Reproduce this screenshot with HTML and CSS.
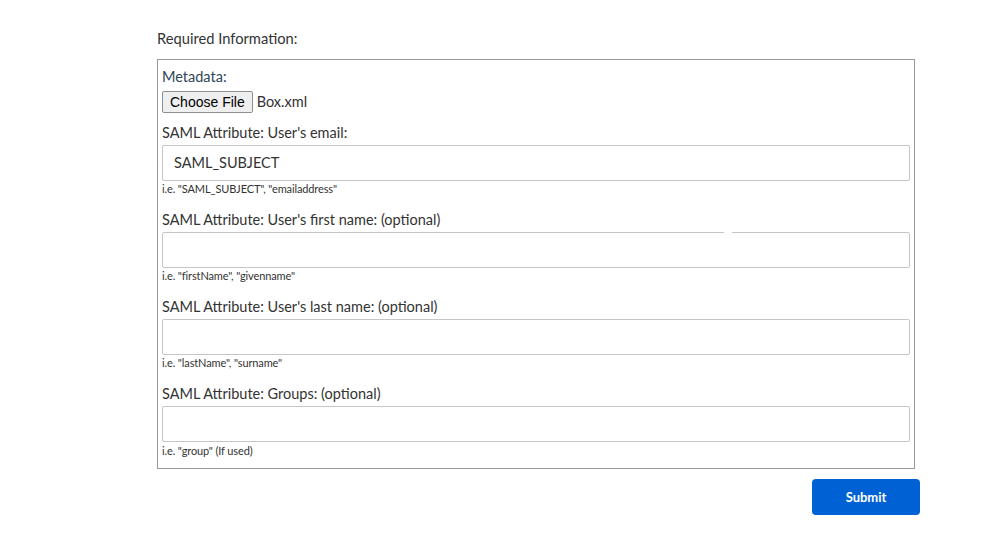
FILE: index.html
```html
<!DOCTYPE html>
<html>
<head>
<meta charset="utf-8">
<link rel="stylesheet" href="styles.css">
</head>
<body>
<div class="page">
  <div class="heading">Required Information:</div>
  <div class="box">
    <div class="field meta">
      <div class="label meta-label">Metadata:</div>
      <div class="file-row">
        <button class="file-btn" type="button">Choose File</button>
        <span class="file-name">Box.xml</span>
      </div>
    </div>
    <div class="field">
      <div class="label">SAML Attribute: User's email:</div>
      <input class="text-input" type="text" value="SAML_SUBJECT">
      <div class="hint">i.e. "SAML_SUBJECT", "emailaddress"</div>
    </div>
    <div class="field">
      <div class="label">SAML Attribute: User's first name: (optional)</div>
      <div class="input-wrap">
        <input class="text-input" type="text">
        <span class="gap-mark"></span>
      </div>
      <div class="hint">i.e. "firstName", "givenname"</div>
    </div>
    <div class="field">
      <div class="label">SAML Attribute: User's last name: (optional)</div>
      <input class="text-input" type="text">
      <div class="hint">i.e. "lastName", "surname"</div>
    </div>
    <div class="field last">
      <div class="label">SAML Attribute: Groups: (optional)</div>
      <input class="text-input" type="text">
      <div class="hint hint-last">i.e. "group" (If used)</div>
    </div>
  </div>
  <div class="actions">
    <button class="submit" type="button">Submit</button>
  </div>
</div>
</body>
</html>
```
FILE: styles.css
```css
html, body {
  margin: 0;
  padding: 0;
  background: #fff;
}
body {
  font-family: Lato, "Noto Sans", sans-serif;
  color: #333;
}
.page {
  width: 763px;
  margin-left: 157px;
  padding-top: 29px;
}
.heading {
  font-size: 14.7px;
  line-height: 18px;
  color: #333;
  margin-bottom: 12px;
}
.box {
  width: 748px;
  border: 1px solid #999;
  padding: 8px 4px 10px 4px;
}
.field {
  display: flex;
  flex-direction: column;
  margin-bottom: 15px;
}
.field.meta {
  margin-bottom: 11px;
}
.field.last {
  margin-bottom: 0;
}
.label {
  font-size: 14.5px;
  line-height: 18px;
  color: #333;
  margin-bottom: 3px;
}
.meta-label {
  color: #2f4458;
  margin-bottom: 5px;
}
.file-row {
  display: flex;
  align-items: center;
  gap: 4px;
}
.file-btn {
  font-family: "Liberation Sans", Arial, sans-serif;
  font-size: 14px;
  line-height: 18px;
  height: 22px;
  padding: 0 7px;
  color: #000;
  background: #efefef;
  border: 1px solid #8f8f8f;
  border-radius: 2px;
  margin: 0;
}
.file-name {
  font-family: Lato, sans-serif;
  font-size: 14.5px;
  color: #333;
  margin-top: -1px;
}
.input-wrap {
  position: relative;
  display: flex;
}
.gap-mark {
  position: absolute;
  top: 0;
  left: 562px;
  width: 8px;
  height: 2px;
  background: #fff;
}
.text-input {
  box-sizing: border-box;
  width: 748px;
  height: 36px;
  margin: 0;
  border: 1px solid #c6c6c6;
  border-radius: 2px;
  padding: 0 11px 2px 11px;
  font-family: Lato, sans-serif;
  font-size: 14.5px;
  color: #333;
  background: #fff;
  outline: none;
}
.hint {
  font-size: 11px;
  line-height: 14px;
  color: #333;
  margin-top: 1px;
  letter-spacing: -0.12px;
}
.hint-last {
  margin-top: 2px;
}
.actions {
  display: flex;
  justify-content: flex-end;
  margin-top: 10px;
}
.submit {
  width: 108px;
  height: 36px;
  border: none;
  border-radius: 4px;
  background: #0061d5;
  color: #fff;
  font-family: Lato, sans-serif;
  font-weight: 700;
  font-size: 13px;
  cursor: pointer;
}
```
